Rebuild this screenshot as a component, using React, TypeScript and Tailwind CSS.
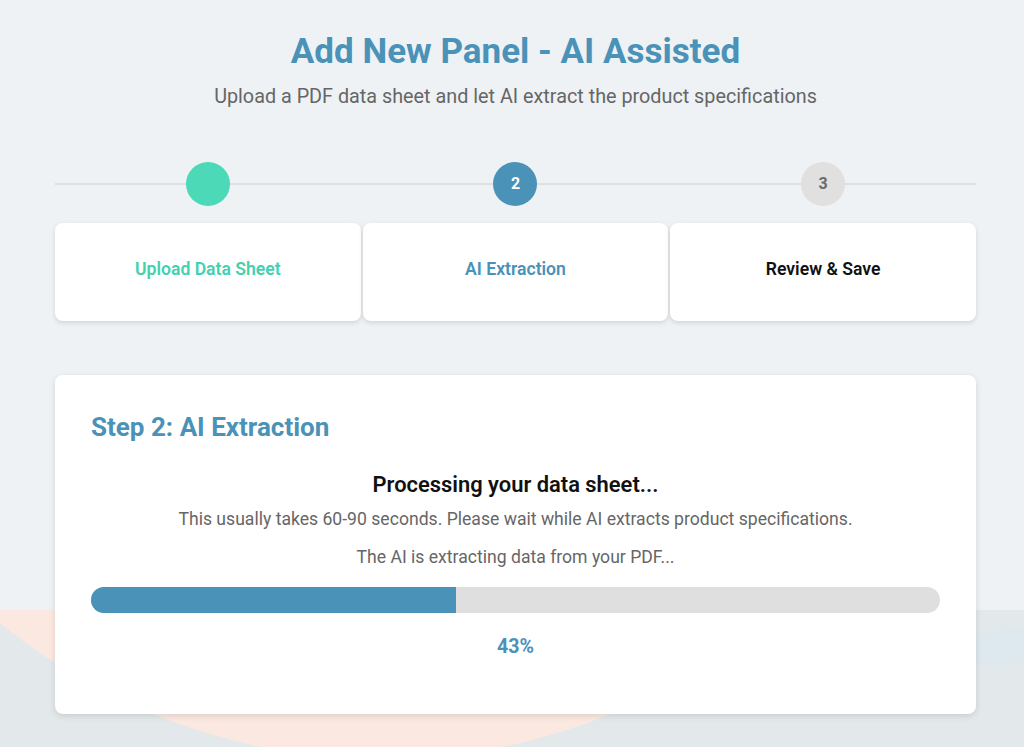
import React from "react"

const steps = [
  { n: "", label: "Upload Data Sheet", circle: "bg-[#4cd9b7]", text: "text-[#44d1b0]" },
  { n: "2", label: "AI Extraction", circle: "bg-[#4a92b8] text-white", text: "text-[#4a92b8]" },
  { n: "3", label: "Review & Save", circle: "bg-[#e0e0e0] text-[#6b6b6b]", text: "text-[#111]" },
]

export default function App() {
  const progress = 43

  return (
    <div className="relative min-h-[747px] overflow-hidden bg-[#eef2f5] font-['Roboto',sans-serif]">
      {/* background decoration */}
      <div className="absolute left-0 right-0 top-[610px] bottom-0 overflow-hidden bg-[#e3e8eb]">
        <div className="absolute left-[-223px] top-[-1061px] h-[1210px] w-[1210px] rounded-full bg-[#fbe9e1]" />
        <div className="absolute left-[700px] top-[12px] h-[300px] w-[900px] rounded-[50%] bg-[#dee8ef]" />
        <div className="absolute left-[420px] top-[52px] h-[400px] w-[1300px] rounded-[50%] bg-[#e3e8eb]" />
      </div>

      <div className="relative ml-[55px] w-[921px] pt-[32px]">
        {/* Header */}
        <h1 className="text-center text-[35px] font-bold leading-[40px] text-[#4a92b8]">
          Add New Panel - AI Assisted
        </h1>
        <p className="mt-[14px] text-center text-[19.8px] leading-[22px] text-[#666]">
          Upload a PDF data sheet and let AI extract the product specifications
        </p>

        {/* Stepper */}
        <div className="relative mt-[54px]">
          <div className="absolute left-0 right-0 top-[21px] h-[2px] bg-[#dde1e4]" />
          <div className="relative grid grid-cols-3 gap-[2px]">
            {steps.map((s) => (
              <div key={s.label} className="flex justify-center">
                <div
                  className={`flex h-[44px] w-[44px] items-center justify-center rounded-full text-[16px] font-bold ${s.circle}`}
                >
                  {s.n}
                </div>
              </div>
            ))}
          </div>
          <div className="mt-[17px] grid grid-cols-3 gap-[2px]">
            {steps.map((s) => (
              <div
                key={s.label}
                className="flex h-[98px] items-center justify-center rounded-lg bg-white pb-[5px] shadow-[0_2px_5px_rgba(0,0,0,0.12)]"
              >
                <span className={`text-[17.6px] font-semibold ${s.text}`}>{s.label}</span>
              </div>
            ))}
          </div>
        </div>

        {/* Extraction card */}
        <div className="mt-[54px] h-[339px] rounded-lg bg-white px-[36px] pt-[36px] shadow-[0_2px_6px_rgba(0,0,0,0.12)]">
          <h2 className="text-[26px] font-bold leading-[32px] text-[#4a92b8]">Step 2: AI Extraction</h2>

          <div className="mt-[29px] text-center">
            <h3 className="text-[21.9px] font-semibold leading-[26px] text-[#111]">
              Processing your data sheet...
            </h3>
            <p className="mt-[11px] text-[17.6px] leading-[20px] text-[#666]">
              This usually takes 60-90 seconds. Please wait while AI extracts product specifications.
            </p>
            <p className="mt-[18px] text-[17.6px] leading-[20px] text-[#666]">
              The AI is extracting data from your PDF...
            </p>
          </div>

          <div className="mt-[20px] h-[26px] w-full overflow-hidden rounded-full bg-[#dfdfdf]">
            <div className="h-full bg-[#4a92b8]" style={{ width: `${progress}%` }} />
          </div>

          <p className="mt-[23px] text-center text-[19.6px] font-bold leading-[22px] text-[#4a92b8]">
            {progress}%
          </p>
        </div>
      </div>
    </div>
  )
}
